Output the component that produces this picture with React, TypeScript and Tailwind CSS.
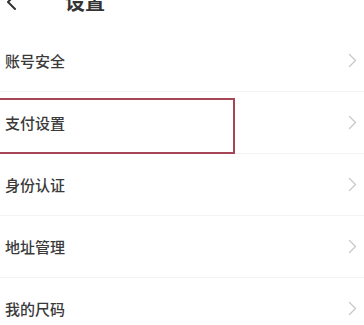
const items = ["账号安全", "支付设置", "身份认证", "地址管理", "我的尺码"];

function Chevron() {
  return (
    <svg width="9" height="15" viewBox="0 0 9 15" fill="none" className="shrink-0">
      <path d="M1.5 1.5L7.5 7.5L1.5 13.5" stroke="#c8c8c8" strokeWidth="1.3" strokeLinecap="round" strokeLinejoin="round" />
    </svg>
  );
}

export default function App() {
  return (
    <div
      className="w-[364px] h-[325px] overflow-hidden bg-white text-[#333]"
      style={{ fontFamily: '"Noto Sans CJK SC", "Noto Sans", sans-serif' }}
    >
      {/* header, scrolled partly out of view */}
      <div className="h-[30px] overflow-hidden">
        <div className="-mt-[18px] h-[40px] flex items-center">
          <svg width="20" height="20" viewBox="0 0 20 20" fill="none" className="ml-[2px]">
            <path d="M13 3L6 10L13 17" stroke="#333" strokeWidth="2" strokeLinecap="round" strokeLinejoin="round" />
          </svg>
          <span className="ml-[43px] text-[20px] font-bold text-[#333]">设置</span>
        </div>
      </div>

      {items.map((label, i) => (
        <div
          key={label}
          className="relative h-[62px] flex items-center justify-between pl-[5px] pr-[7px] border-b border-[#f3f3f3]"
        >
          <span className="mt-[1px] text-[15px] font-medium text-[#3a3a3a]">{label}</span>
          <Chevron />
          {i === 1 && (
            <div className="absolute -left-[2px] top-[6px] w-[237px] h-[56px] border-2 border-[#a64556] pointer-events-none" />
          )}
        </div>
      ))}
    </div>
  );
}
